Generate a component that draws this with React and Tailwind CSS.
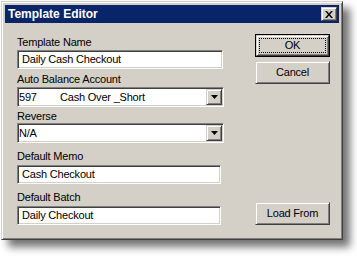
import React from 'react';

const sunken = 'border border-t-[#808080] border-l-[#808080] border-r-white border-b-white shadow-[inset_1px_1px_0_#404040,inset_-1px_-1px_0_#d4d0c8] bg-white';
const raised = 'border border-t-[#d4d0c8] border-l-[#d4d0c8] border-r-[#404040] border-b-[#404040] shadow-[inset_1px_1px_0_#fff,inset_-1px_-1px_0_#808080] bg-[#d4d0c8]';

const Label = ({ children, className = '' }) => (
    <div className={`h-[13px] leading-[13px] text-black ${className}`}>{children}</div>
);

const TextBox = ({ value, className = '' }) => (
    <div className={`${sunken} h-[19px] flex items-center pl-[4px] leading-[13px] ${className}`}>{value}</div>
);

const Combo = ({ children, className = '' }) => (
    <div className={`${sunken} h-[20px] flex items-center pl-[1px] pr-[1px] ${className}`}>
        <div className="flex-1 flex items-center leading-[13px]">{children}</div>
        <div className={`${raised} w-[16px] h-[16px] flex items-center justify-center`}>
            <svg width="7" height="4" viewBox="0 0 7 4">
                <path d="M0 0h7L3.5 4z" fill="#000" />
            </svg>
        </div>
    </div>
);

const Button = ({ children, isDefault, className = '' }) => (
    <div className={`${isDefault ? 'p-px bg-black' : ''} w-[75px] ${className}`}>
        <div className={`${raised} ${isDefault ? 'h-[21px]' : 'h-[23px]'} flex items-center justify-center p-[2px]`}>
            <div className={`w-full h-full flex items-center justify-center ${isDefault ? 'outline outline-1 outline-dotted outline-black -outline-offset-1' : ''}`}>
                {children}
            </div>
        </div>
    </div>
);

const App = () => {
    return (
        <div className="w-[357px] h-[256px] bg-white pt-px pl-px text-[11px] tracking-[-0.2px] text-black" style={{ fontFamily: '"Liberation Sans", Arial, sans-serif' }}>
            <div className="w-[342px] h-[239px] bg-[#d4d0c8] border border-t-[#d4d0c8] border-l-[#d4d0c8] border-r-[#404040] border-b-[#404040] shadow-[inset_1px_1px_0_#fff,inset_-1px_-1px_0_#808080,7px_7px_8px_rgba(0,0,0,0.55)] p-[3px]">
                {/* title bar */}
                <div className="h-[18px] bg-[#0a246a] flex items-center justify-between pl-[3px] pr-[2px]">
                    <span className="text-white font-bold text-[12px] leading-[14px] tracking-normal">Template Editor</span>
                    <div className={`${raised} w-[16px] h-[14px] flex items-center justify-center`}>
                        <svg width="8" height="7" viewBox="0 0 8 7">
                            <path d="M0 0h2l2 2.5L6 0h2L5 3.5 8 7H6L4 4.5 2 7H0l3-3.5z" fill="#000" />
                        </svg>
                    </div>
                </div>

                <div className="flex">
                    {/* fields */}
                    <div className="pl-[12px] pt-[13px] w-[220px]">
                        <Label>Template Name</Label>
                        <TextBox value="Daily Cash Checkout" className="mt-px w-[206px]" />

                        <Label className="mt-[4px]">Auto Balance Account</Label>
                        <Combo className="mt-px w-[207px]">
                            <span className="w-[41px]">597</span>
                            <span>Cash Over _Short</span>
                        </Combo>

                        <Label className="mt-[3px]">Reverse</Label>
                        <Combo className="mt-0 w-[207px]">
                            <span>N/A</span>
                        </Combo>

                        <Label className="mt-[7px]">Default Memo</Label>
                        <TextBox value="Cash Checkout" className="mt-[2px] w-[204px]" />

                        <Label className="mt-[7px]">Default Batch</Label>
                        <TextBox value="Daily Checkout" className="mt-[2px] w-[204px]" />
                    </div>

                    {/* buttons */}
                    <div className="pl-[30px] pt-[11px]">
                        <Button isDefault>OK</Button>
                        <Button className="mt-[4px]">Cancel</Button>
                        <Button className="mt-[118px]">Load From</Button>
                    </div>
                </div>
            </div>
        </div>
    );
};

export default App;
